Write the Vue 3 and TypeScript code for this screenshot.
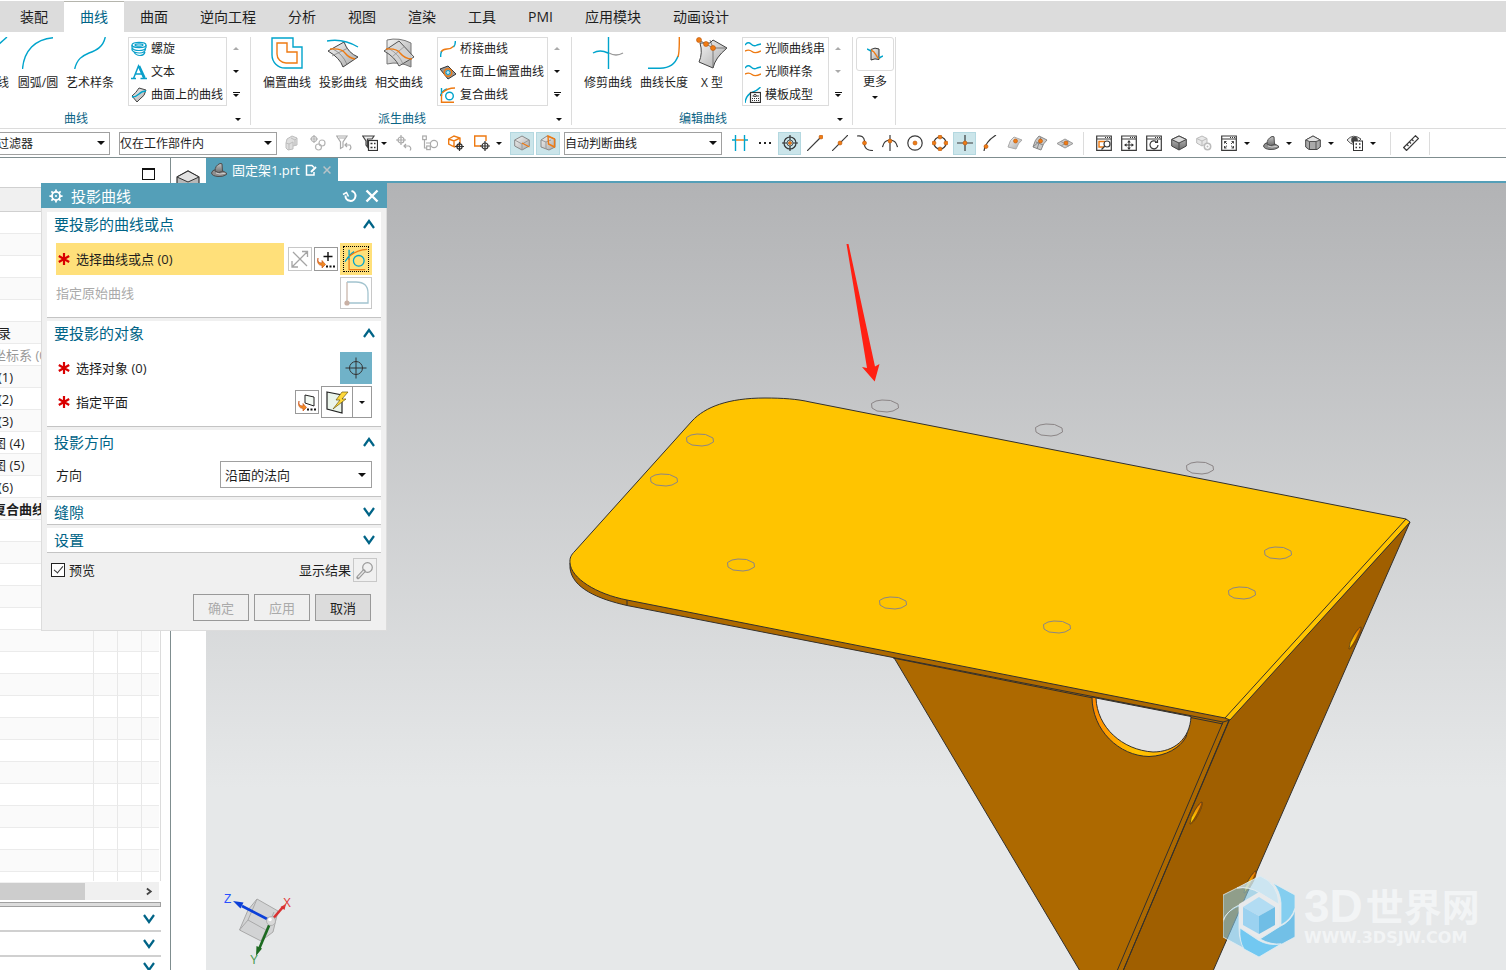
<script setup lang="ts">
import { ref } from 'vue'

interface Tool { icon: string; label: string; pressed?: boolean; menu?: boolean }
interface Command { icon: string; label: string; narrow?: string }
interface Group { title: string; cls: string; big: Command[]; list: Command[]; end?: boolean }
interface TreeRow { text: string; inset?: boolean; muted?: boolean; strong?: boolean }

const tabs = ['装配', '曲线', '曲面', '逆向工程', '分析', '视图', '渲染', '工具', 'PMI', '应用模块', '动画设计']
const activeTab = ref('曲线')

const groups: Group[] = [
  {
    title: '曲线', cls: 'first',
    big: [
      { icon: 'line', label: '直线', narrow: 'w34' },
      { icon: 'arc', label: '圆弧/圆', narrow: 'w48' },
      { icon: 'spline', label: '艺术样条' }
    ],
    list: [
      { icon: 'helix', label: '螺旋' },
      { icon: 'text', label: '文本' },
      { icon: 'surfcurve', label: '曲面上的曲线' }
    ]
  },
  {
    title: '派生曲线', cls: '',
    big: [
      { icon: 'offset', label: '偏置曲线' },
      { icon: 'project', label: '投影曲线' },
      { icon: 'intersect', label: '相交曲线' }
    ],
    list: [
      { icon: 'bridge', label: '桥接曲线' },
      { icon: 'faceoffset', label: '在面上偏置曲线' },
      { icon: 'composite', label: '复合曲线' }
    ]
  },
  {
    title: '编辑曲线', cls: '', end: true,
    big: [
      { icon: 'trim', label: '修剪曲线' },
      { icon: 'length', label: '曲线长度' },
      { icon: 'xform', label: 'X 型', narrow: 'w40' }
    ],
    list: [
      { icon: 'smooth', label: '光顺曲线串' },
      { icon: 'smooth', label: '光顺样条' },
      { icon: 'template', label: '模板成型' }
    ]
  }
]

const filterTools: Tool[] = [
  { icon: 'boxes', label: '选择组件' },
  { icon: 'chain', label: '关联选择' },
  { icon: 'funnelback', label: '重置过滤器' },
  { icon: 'funnellist', label: '过滤器选项', menu: true }
]
const pickTools: Tool[] = [
  { icon: 'targetback', label: '恢复选择' },
  { icon: 'treecircle', label: '全选' },
  { icon: 'cubetarget', label: '选择体' },
  { icon: 'recttarget', label: '矩形选择', menu: true }
]
const cubeTools: Tool[] = [
  { icon: 'cubeedge', label: '高亮隐藏边', pressed: true },
  { icon: 'cubeface', label: '允许选择隐藏线框', pressed: true }
]
const snapTools: Tool[] = [
  { icon: 'hash', label: '在相交处停止' },
  { icon: 'dots', label: '更多选项' },
  { icon: 'snapon', label: '启用捕捉点', pressed: true },
  { icon: 'endpoint', label: '端点' },
  { icon: 'midpoint', label: '中点' },
  { icon: 'control', label: '控制点' },
  { icon: 'cross', label: '交点' },
  { icon: 'center', label: '圆弧中心' },
  { icon: 'quadrant', label: '象限点' },
  { icon: 'existing', label: '现有点', pressed: true },
  { icon: 'oncurve', label: '曲线上的点' },
  { icon: 'onface', label: '面上的点' },
  { icon: 'onmesh', label: '小平面顶点' },
  { icon: 'grid', label: '有界栅格点' }
]
const viewTools: Tool[] = [
  { icon: 'winzoom', label: '缩放' },
  { icon: 'winpan', label: '平移' },
  { icon: 'winrotate', label: '旋转' },
  { icon: 'solid', label: '透视' },
  { icon: 'solidgear', label: '编辑截面' },
  { icon: 'winfit', label: '适合窗口', menu: true },
  { icon: 'bracket', label: '定向视图', menu: true },
  { icon: 'shaded', label: '带边着色', menu: true },
  { icon: 'eyelist', label: '显示和隐藏', menu: true }
]

const named: TreeRow[] = [
  { text: '' }, { text: '' }, { text: '' }, { text: '' }, { text: '' },
  { text: '录', inset: true },
  { text: '坐标系 (0)', muted: true },
  { text: '(1)', inset: true },
  { text: '(2)', inset: true },
  { text: '(3)', inset: true },
  { text: '图 (4)' },
  { text: '图 (5)' },
  { text: '(6)', inset: true },
  { text: '复合曲线', strong: true }
]
const rows: TreeRow[] = [...named, ...Array.from({ length: 17 }, () => ({ text: '' }))]

const curveRings: [number, number][] = [
  [885, 406], [1049, 430], [1200, 468], [1278, 553], [1242, 593],
  [1057, 627], [893, 603], [741, 565], [664, 480], [700, 440]
]
const slots: [number, number][] = [[1355, 638], [1196, 813], [1250, 882]]
const preview = ref(true)
const direction = ref('沿面的法向')
</script>

<template>
  <svg class="defs" width="0" height="0" aria-hidden="true">
    <defs>
      <linearGradient id="steel" x1="0" y1="0" x2="1" y2="1">
        <stop offset="0" stop-color="#f4f4f4" /><stop offset="1" stop-color="#a9a9a9" />
      </linearGradient>
      <linearGradient id="dark" x1="0" y1="0" x2="0" y2="1">
        <stop offset="0" stop-color="#c4c4c4" /><stop offset="1" stop-color="#6c6c6c" />
      </linearGradient>
      <linearGradient id="rim" x1="0" y1="0" x2="1" y2="0">
        <stop offset="0" stop-color="#ff8a00" /><stop offset="0.45" stop-color="#ffc400" />
        <stop offset="0.75" stop-color="#ffb000" /><stop offset="1" stop-color="#e07000" />
      </linearGradient>
      <linearGradient id="slotfill" x1="0" y1="1" x2="0" y2="0">
        <stop offset="0.2" stop-color="#ffd000" /><stop offset="0.9" stop-color="#e87800" />
      </linearGradient>
    </defs>

    <symbol id="line" viewBox="0 0 32 32"><path class="c" d="M0 23L26 0" /></symbol>
    <symbol id="arc" viewBox="0 0 32 32"><path class="c" d="M.5 32C2 14 13 2 31 .7" /></symbol>
    <symbol id="spline" viewBox="0 0 32 32"><path class="c" d="M.7 32C3 22 8 19 15 16C23 13 29 10 31.300 0" /></symbol>
    <symbol id="offset" viewBox="0 0 32 32">
      <path class="c" d="M1 1H22V10H31V31H14A13 13 0 0 1 1 18Z" />
      <path class="o" d="M6 6H16V15H26V26H15A9 9 0 0 1 6 17Z" />
    </symbol>
    <symbol id="project" viewBox="0 0 32 32">
      <path d="M1 14L17 5Q21 16 31 20L16 30Q13 21 1 14Z" fill="url(#steel)" stroke="#444" />
      <path d="M5 11.500Q16 17 20 27.500M21 11L5 19" fill="none" stroke="#777" stroke-width=".7" />
      <path class="o" d="M3 12Q15 11 18 16Q22 21 28 22" />
      <path class="c" d="M0 4Q16 1 31 10" />
    </symbol>
    <symbol id="intersect" viewBox="0 0 32 32">
      <path d="M4 3Q16 0 28 6V30Q16 24 4 27Z" fill="url(#steel)" stroke="#777" />
      <path d="M1 14L16 4L31 20L16 29Q12 20 1 14Z" fill="#d4d4d4" fill-opacity=".75" stroke="#555" />
      <path d="M5 11Q16 17 20 27M22 9L10 19" fill="none" stroke="#888" stroke-width=".7" />
      <path class="o" d="M3 12Q14 11 17 16Q22 22 29 22" />
    </symbol>
    <symbol id="trim" viewBox="0 0 32 32">
      <path class="c" d="M16.500 0V32M1 16Q8 12 16 16" />
      <path d="M17 16Q24 20 31 16" fill="none" stroke="#999" stroke-width="1.300" />
    </symbol>
    <symbol id="length" viewBox="0 0 32 32">
      <path class="c" d="M0 31.300H12Q26 31 30 19" /><path class="o" d="M30 20Q31.500 15 31.300 0" />
    </symbol>
    <symbol id="xform" viewBox="0 0 32 32">
      <path d="M14 6L17 3L31 11Q19 21 17 31L3 25Q7 16 4 6Z" fill="url(#steel)" stroke="#444" />
      <path d="M3 3L17 11L14 3M17 11L31 11M17 11V31" fill="none" stroke="#666" stroke-width=".8" />
      <circle cx="3" cy="3" r="2.500" class="od" /><circle cx="10" cy="7" r="2.500" class="od" /><circle cx="17" cy="11" r="2.500" class="od" />
    </symbol>
    <symbol id="more" viewBox="0 0 16 16">
      <path d="M4 3.500Q8 1 12 3V13.500Q8 12 4 14Z" fill="url(#steel)" stroke="#333" />
      <path class="o" d="M4 4Q7 5 9 9T13 12" /><path class="c" d="M0 3L4 5M12 12L16 10" />
    </symbol>

    <symbol id="helix" viewBox="0 0 16 16">
      <g fill="none" stroke="#0a9fca" stroke-width="1.200">
        <ellipse cx="8" cy="4" rx="7" ry="2.600" /><ellipse cx="8" cy="4" rx="4" ry="1.200" />
        <path d="M1 4V6.500Q2 9.500 8 9.500T15 6.500V4M1 7V9Q3 12 8.500 12T14.500 8M3 11Q5 14.500 9 14.500T14 11" />
      </g>
    </symbol>
    <symbol id="text" viewBox="0 0 16 16">
      <path d="M0 14.500H5M9.500 14.500H16M2.500 14.500L7.500 2L13 14.500M4.500 10H11" fill="none" stroke="#0a9fca" stroke-width="1.500" />
      <path d="M8 2L13.500 14" stroke="#0a9fca" stroke-width="2.600" />
    </symbol>
    <symbol id="surfcurve" viewBox="0 0 16 16">
      <path d="M1 9Q5 6 8 1L15 3Q14 9 9 12L6 15Z" fill="url(#steel)" stroke="#444" />
      <path class="c" d="M1 10Q5 10 8 7T15 4" />
    </symbol>
    <symbol id="bridge" viewBox="0 0 16 16">
      <path class="o" d="M1 11Q3 8 7 8T14 5" /><path class="c" d="M.7 16Q.5 13 1.500 10.500M13.500 6Q15.500 4 15.300 0" />
    </symbol>
    <symbol id="faceoffset" viewBox="0 0 16 16">
      <path d="M0 5L8 2L16 10L8 15Z" fill="#999" stroke="#333" />
      <circle cx="8" cy="8.500" r="3.800" class="o" /><circle cx="8" cy="8.500" r="2" fill="#bfe6f0" stroke="#0a9fca" />
    </symbol>
    <symbol id="composite" viewBox="0 0 16 16">
      <path class="c" d="M1.500 1V9M0 9Q3 3 7 2" /><path class="o" d="M1.500 7V15.300H14M2 6Q7 1 15 1" /><circle class="c" cx="9.500" cy="9" r="3.800" />
    </symbol>
    <symbol id="smooth" viewBox="0 0 16 16">
      <path class="c" d="M0 4Q3 0 6 3T12 4L16 3" /><path class="o" d="M0 10Q4 8 7 10.500T16 10" />
    </symbol>
    <symbol id="template" viewBox="0 0 16 16">
      <path class="c" d="M0 16Q1 8 7 5.500T15.500 0" />
      <rect x="5.500" y="5.500" width="10" height="10" fill="#fff" stroke="#333" stroke-width="1.200" />
      <path d="M7 13.500H14M7 11.500H14" stroke="#333" stroke-dasharray="1 1" /><path d="M7.500 9H9M11 9H14" stroke="#333" /><circle cx="10" cy="8.500" r="1.200" fill="none" stroke="#333" />
    </symbol>

    <symbol id="boxes" viewBox="0 0 16 16">
      <path d="M3 4L8 1L13 3V10L9 11V14L4 15L2 13V8Z" fill="#dedede" stroke="#bdbdbd" /><path d="M2 8L5 9L9 7M5 9V15M9 7V11M7 3L11 5L13 3M11 5V10" fill="none" stroke="#bdbdbd" />
    </symbol>
    <symbol id="chain" viewBox="0 0 16 16">
      <g fill="none" stroke="#b5b5b5" stroke-width="1.200"><circle cx="4" cy="4" r="2.700" /><path d="M4 0V8M0 4H8" /><circle cx="12" cy="8" r="3" /><circle cx="8.500" cy="12" r="3" /></g>
    </symbol>
    <symbol id="funnelback" viewBox="0 0 16 16">
      <g fill="none" stroke="#aaa" stroke-width="1.200"><path d="M.7 1H11L7 7V12L4.500 13.500V7Z" /><path d="M3 3H9M9 10H14Q16 13 13.500 15M11 8L9 10L11 12" /></g>
    </symbol>
    <symbol id="funnellist" viewBox="0 0 16 16">
      <path d="M.7 1H12L10 4H5.500V12L4 10V6Z" fill="#eee" stroke="#444" stroke-width="1.200" />
      <rect x="6.500" y="5.500" width="9" height="10" fill="#fff" stroke="#333" stroke-width="1.200" /><path d="M8.500 8.500H10.500M8.500 12.500H10.500M12 8.500H13.500M12 12.500H13.500" stroke="#333" stroke-width="1.400" />
    </symbol>
    <symbol id="targetback" viewBox="0 0 16 16">
      <g fill="none" stroke="#aaa" stroke-width="1.200"><circle cx="5" cy="5" r="3" /><path d="M5 0V10M0 5H10M8 11H13Q16 13 14 15.500M10 9L8 11L10 13" /></g>
    </symbol>
    <symbol id="treecircle" viewBox="0 0 16 16">
      <g fill="none" stroke="#aaa" stroke-width="1.200"><rect x=".7" y="1" width="3.600" height="3.600" /><path d="M2.500 5V13H5M4 8H8" /><rect x="4.700" y="11" width="3.600" height="3.600" /><circle cx="12" cy="9" r="3.600" /></g>
    </symbol>
    <symbol id="cubetarget" viewBox="0 0 16 16">
      <path class="o" d="M.7 4L6 1L12 3V9L6.500 12L.7 9ZM.7 4L6 6L12 3M6 6V12" />
      <g fill="none" stroke="#333" stroke-width="1.200"><circle cx="11.500" cy="11.500" r="2.600" /><path d="M11.500 7V16M7 11.500H16" /></g>
    </symbol>
    <symbol id="recttarget" viewBox="0 0 16 16">
      <path class="o" d="M7 11H.7V1H12V6" /><g fill="none" stroke="#333" stroke-width="1.200"><circle cx="11" cy="11" r="3" /><path d="M11 6V16M6 11H16" /></g>
    </symbol>
    <symbol id="cubeedge" viewBox="0 0 16 16">
      <path d="M.7 5L8 1L15.300 5V11L8 15L.7 11Z" fill="url(#steel)" stroke="#888" /><path d="M.7 5L8 9L15.300 5M8 9V15" fill="none" stroke="#999" /><path class="o" d="M8 8L15.500 12" />
    </symbol>
    <symbol id="cubeface" viewBox="0 0 16 16">
      <path d="M1 5L7 1L15 4V12L9 15L1 12Z" fill="url(#steel)" stroke="#888" /><path d="M1 5L6 7V14M6 7L11 5" fill="none" stroke="#999" /><path class="o" d="M8 1L14.500 4V12L8.500 9Z" />
    </symbol>
    <symbol id="hash" viewBox="0 0 16 16"><path class="c" d="M3.500 0V16M12.500 0V16M0 5H3M13 5H16" /><path class="o" d="M4 5H12" /></symbol>
    <symbol id="dots" viewBox="0 0 16 16"><path d="M2 8H4M7 8H9M12 8H14" stroke="#222" stroke-width="2" /></symbol>
    <symbol id="snapon" viewBox="0 0 16 16">
      <g fill="none" stroke="#333" stroke-width="1.200"><circle cx="8" cy="8" r="6" /><circle cx="8" cy="8" r="3" stroke-width=".8" /><path d="M8 0V5M8 11V16M0 8H5M11 8H16" /></g><circle cx="8" cy="8" r="1.600" class="od" />
    </symbol>
    <symbol id="endpoint" viewBox="0 0 16 16"><path class="k" d="M0 16L13 3" /><circle cx="14" cy="2" r="2" class="od" /></symbol>
    <symbol id="midpoint" viewBox="0 0 16 16"><path class="k" d="M0 16L16 0" /><circle cx="8" cy="8" r="2" class="od" /></symbol>
    <symbol id="control" viewBox="0 0 16 16"><path class="k" d="M0 1Q7 0 7.500 6V10Q8 15.500 16 15.500" /><circle cx="7.500" cy="8" r="2" class="od" /></symbol>
    <symbol id="cross" viewBox="0 0 16 16"><path class="k" d="M8 0V16M.5 12Q2 5 8 5T15.500 12" /><circle cx="8" cy="6" r="2" class="od" /></symbol>
    <symbol id="center" viewBox="0 0 16 16"><circle class="k" cx="8" cy="8" r="7.200" /><circle cx="8" cy="8" r="2" class="od" /></symbol>
    <symbol id="quadrant" viewBox="0 0 16 16"><circle class="k" cx="8" cy="8" r="6" /><circle cx="8" cy="2" r="2" class="od" /><circle cx="8" cy="14" r="2" class="od" /><circle cx="2" cy="8" r="2" class="od" /><circle cx="14" cy="8" r="2" class="od" /></symbol>
    <symbol id="existing" viewBox="0 0 16 16"><path class="k" d="M8 0V16M0 8H16" /><circle cx="8" cy="8" r="2" class="od" /></symbol>
    <symbol id="oncurve" viewBox="0 0 16 16"><path class="k" d="M2 16Q3 7 14 0" /><circle cx="4" cy="11.500" r="2" class="od" /></symbol>
    <symbol id="onface" viewBox="0 0 16 16"><path d="M1 12Q3 4 7 2L15 5Q11 8 9 14Z" fill="url(#steel)" stroke="#aaa" /><circle cx="8.500" cy="6" r="2" class="od" /></symbol>
    <symbol id="onmesh" viewBox="0 0 16 16"><path d="M1 12Q3 4 7 1L15 5Q11 8 9 15Z" fill="#c8c8c8" stroke="#888" /><path d="M4 7L11 10M5 14L9 2M1 12L10 4" stroke="#888" /><circle cx="8.500" cy="6" r="2" class="od" /></symbol>
    <symbol id="grid" viewBox="0 0 16 16"><path d="M0 8.500L8 4L16 8.500L8 13Z" fill="#ccc" stroke="#999" /><path d="M4 6.500L12 11M4 11L12 6" stroke="#999" /><circle cx="9" cy="8" r="2" class="od" /></symbol>

    <symbol id="winzoom" viewBox="0 0 16 16"><path class="k" d="M.7 1H15.300V15.300H.7ZM.7 4H15" /><path d="M9 2.500H14" stroke="#333" stroke-dasharray="1 1" /><path class="o" d="M8 12H3V6.500H9" /><circle cx="11" cy="9" r="3" class="k" /><path class="k" d="M9 11L5.500 14.500" /></symbol>
    <symbol id="winpan" viewBox="0 0 16 16"><path class="k" d="M.7 1H15.300V15.300H.7ZM.7 4H15" /><path d="M8 6V14M4 10H12" stroke="#333" /><path d="M8 5L9.800 7.500H6.200ZM8 15L9.800 12.500H6.200ZM3 10L5.500 8.200V11.800ZM13 10L10.500 8.200V11.800Z" fill="#333" /><path d="M9 2.500H14" stroke="#333" stroke-dasharray="1 1" /></symbol>
    <symbol id="winrotate" viewBox="0 0 16 16"><path class="k" d="M.7 1H15.300V15.300H.7ZM.7 4H15M10.500 6.700A4 4 0 1 0 12 10M11.500 5V7.500H9" /><path d="M9 2.500H14" stroke="#333" stroke-dasharray="1 1" /></symbol>
    <symbol id="winfit" viewBox="0 0 16 16"><path class="k" d="M.7 1H15.300V15.300H.7ZM.7 4H15" /><path d="M3.500 8.500V6.500H5.500M3.500 6.500L6 9M12.500 8.500V6.500H10.500M12.500 6.500L10 9M3.500 11V13H5.500M3.500 13L6 10.700M12.500 11V13H10.500M12.500 13L10 10.700" fill="none" stroke="#333" stroke-width=".9" /><path d="M9 2.500H14" stroke="#333" stroke-dasharray="1 1" /></symbol>
    <symbol id="solid" viewBox="0 0 16 16"><path d="M.7 4.500L8 1L15.300 4.500V11L8 15L.7 11Z" fill="url(#dark)" stroke="#444" /><path d="M.7 4.500L8 8L15.300 4.500L8 1Z" fill="#dcdcdc" stroke="#444" /><path d="M8 8V15" stroke="#444" /></symbol>
    <symbol id="solidgear" viewBox="0 0 16 16"><path d="M.7 3.500L6 1L11 3.500V8L6 11L.7 8Z" fill="#e8e8e8" stroke="#bbb" /><path d="M.7 3.500L6 6L11 3.500M6 6V11" fill="none" stroke="#bbb" /><circle cx="11.500" cy="11.500" r="3.200" fill="#fff" stroke="#bbb" stroke-width="1.500" /><circle cx="11.500" cy="11.500" r="1" fill="#bbb" /></symbol>
    <symbol id="bracket" viewBox="0 0 16 16">
      <path d="M.5 11Q1 8 5 7.500L10 8L15.500 11V12.500Q12 15 7 14.500Q1 14 .5 11Z" fill="#8e8e8e" stroke="#4c4c4c" />
      <path d="M4 9Q4 3.500 9 1.500L11 1.800L11.500 9.500Q7 12 4 9Z" fill="url(#dark)" stroke="#4c4c4c" />
      <path d="M5 11Q8 13 14.500 11.200" fill="none" stroke="#d0d0d0" />
    </symbol>
    <symbol id="shaded" viewBox="0 0 16 16"><path d="M.7 5L8 1L15.300 5V12L12 14.500H4L.7 12Z" fill="#aaa" stroke="#444" /><path d="M.7 5L8 1L15.300 5L11 6.500H4.500Z" fill="#e4e4e4" stroke="#555" /><path d="M4.500 6.500V14.500M11 6.500V14.500" stroke="#555" /></symbol>
    <symbol id="eyelist" viewBox="0 0 16 16"><path d="M0 5Q6 -2 14 4L8 10Q3 9 0 5Z" fill="#eee" stroke="#555" /><circle cx="7.500" cy="5" r="3.300" fill="#444" /><rect x="6.500" y="6" width="9" height="9.500" fill="#fff" stroke="#333" /><path d="M8.500 9H10M8.500 12.500H10M12 9H13.500M12 12.500H13.500" stroke="#333" stroke-width="1.400" /></symbol>
    <symbol id="ruler" viewBox="0 0 16 16"><path class="k" d="M.7 12.500L12.500 .7L15.500 3.500L3.500 15.500ZM4 9.500L5.500 11M6.500 7L8 8.500M9 4.500L10.500 6" /></symbol>

    <symbol id="gear" viewBox="0 0 16 16"><circle cx="8" cy="8" r="4.600" fill="none" stroke="#fff" stroke-width="2" /><path d="M8 .5V4M8 12V15.500M.5 8H4M12 8H15.500M2.700 2.700L5 5M11 11L13.300 13.300M13.300 2.700L11 5M5 11L2.700 13.300" stroke="#fff" stroke-width="2" /><circle cx="8" cy="8" r="1.200" fill="#fff" /></symbol>
    <symbol id="reset" viewBox="0 0 16 16"><path d="M9.500 3A5 5 0 1 1 3.500 7.500" fill="none" stroke="#fff" stroke-width="2" /><path d="M1 6.500L4.500 4.500L6.500 8.500" fill="none" stroke="#fff" stroke-width="1.500" /></symbol>
    <symbol id="close" viewBox="0 0 16 16"><path d="M2.500 2.500L13.500 13.500M13.500 2.500L2.500 13.500" stroke="currentColor" stroke-width="2.400" /></symbol>
    <symbol id="up" viewBox="0 0 12 10"><path d="M1 9L6 2L11 9" fill="none" stroke="#006487" stroke-width="2.200" /></symbol>
    <symbol id="down" viewBox="0 0 12 10"><path d="M1 1L6 8L11 1" fill="none" stroke="#006487" stroke-width="2.200" /></symbol>
    <symbol id="star" viewBox="0 0 12 12"><path d="M6 0V12M.8 3L11.200 9M.8 9L11.200 3" stroke="#d90000" stroke-width="2.200" /></symbol>
    <symbol id="reverse" viewBox="0 0 20 20"><path d="M3 3L17 17M17 3L2 18M12 2.500H17.500V8M2 12V18H8" fill="none" stroke="#a5a5a5" stroke-width="1.300" /></symbol>
    <symbol id="addpoint" viewBox="0 0 20 20"><path d="M12 3V12M7.500 7.500H16.500" stroke="#111" stroke-width="1.400" /><path d="M2 9Q1 14 6 14V11.500L9.500 15.500L6 19V16.500Q0 16 2 9Z" fill="#f08a24" stroke="#c44a10" stroke-width=".6" /><path d="M10 17.500H12M13.500 17.500H15.500M17 17.500H19" stroke="#111" stroke-width="2" /></symbol>
    <symbol id="curvepick" viewBox="0 0 26 26"><path class="c" d="M5.500 3V14M1 16Q6 8 11 5" /><path class="o" d="M5.500 12V24.500H23M6 10Q14 3 25 2.500" /><circle class="c" cx="16" cy="15" r="5.800" /></symbol>
    <symbol id="origin" viewBox="0 0 26 26"><path d="M4 22V2" fill="none" stroke="#c9b7ac" stroke-width="1.300" /><path d="M4 2H13Q25 2 25 13V23H6" fill="none" stroke="#a3c4cf" stroke-width="1.300" /><circle cx="4" cy="23" r="2.600" fill="#c9b0a4" /></symbol>
    <symbol id="pick" viewBox="0 0 26 26"><circle cx="13" cy="13" r="6.500" fill="none" stroke="#333" /><path d="M13 2.500V23.500M2.500 13H23.500" stroke="#333" /></symbol>
    <symbol id="planedlg" viewBox="0 0 20 20"><path d="M8 3L17 5V14L8 11Z" fill="#f4faf4" stroke="#222" /><path d="M2 9Q1 14 6 14V11.500L9.500 15.500L6 19V16.500Q0 16 2 9Z" fill="#f08a24" stroke="#c44a10" stroke-width=".6" /><path d="M10 17.500H12M13.500 17.500H15.500M17 17.500H19" stroke="#111" stroke-width="2" /></symbol>
    <symbol id="plane" viewBox="0 0 26 26"><path d="M3 3L18 6V24L3 20Z" fill="#eaf4ea" stroke="#222" stroke-width="1.200" /><path d="M18 3L12 11H16L9 20L22 10H18L24 3Z" fill="#ffd83a" stroke="#6b5a10" stroke-width=".7" /></symbol>
    <symbol id="loupe" viewBox="0 0 20 20"><circle cx="12.500" cy="7.500" r="4.800" fill="none" stroke="#999" stroke-width="1.200" /><path d="M9 11L3 17.500" stroke="#999" stroke-width="3.400" stroke-linecap="round" /><path d="M9 11L3.200 17.200" stroke="#e6e6e6" stroke-width="1.400" /></symbol>
    <symbol id="docedit" viewBox="0 0 12 12"><path d="M9 8V11H1.500V1.500H7L9 3.500" fill="none" stroke="#fff" stroke-width="1.500" /><path d="M6 8L11 3" stroke="#fff" stroke-width="2" /></symbol>
    <symbol id="part" viewBox="0 0 24 24"><path d="M1 8L12 2L23 8V20H1Z" fill="#b8b8b8" stroke="#333" stroke-width="1.200" /><path d="M1 8L12 2L23 8L12 13Z" fill="#e2e2e2" stroke="#333" /></symbol>
  </svg>

  <div class="app">
    <nav class="tabs">
      <button v-for="t in tabs" :key="t" type="button" class="tab" :class="{ active: t === activeTab }" @click="activeTab = t">{{ t }}</button>
    </nav>

    <div class="ribbon">
      <section v-for="g in groups" :key="g.title" class="group" :class="g.cls">
        <div class="cmds">
          <button v-for="b in g.big" :key="b.label" type="button" class="big" :class="b.narrow">
            <svg class="i32"><use :href="'#' + b.icon" /></svg><span>{{ b.label }}</span>
          </button>
          <div class="gallery">
            <button v-for="c in g.list" :key="c.label" type="button" class="small">
              <svg class="i16"><use :href="'#' + c.icon" /></svg><span>{{ c.label }}</span>
            </button>
          </div>
          <div class="scroller">
            <button type="button" aria-label="向上" class="scroll"><i class="tri upward faint"></i></button>
            <button type="button" aria-label="向下" class="scroll"><i class="tri" :class="{ faint: g.end }"></i></button>
            <button type="button" aria-label="展开" class="scroll"><i class="bar"></i><i class="tri"></i></button>
          </div>
        </div>
        <div class="caption"><span>{{ g.title }}</span><button type="button" aria-label="选项" class="launch"><i class="tri"></i></button></div>
      </section>
      <section class="group last">
        <button type="button" class="more">
          <span class="frame"><svg class="i16"><use href="#more" /></svg></span><span>更多</span><i class="tri"></i>
        </button>
      </section>
    </div>

    <div class="selbar">
      <label class="combo cut"><select aria-label="选择过滤器"><option>无选择过滤器</option></select></label>
      <label class="combo scope"><select aria-label="选择范围"><option>仅在工作部件内</option></select></label>
      <div class="tools wide">
        <template v-for="t in filterTools" :key="t.icon">
          <button type="button" class="tool" :aria-label="t.label"><svg class="i16"><use :href="'#' + t.icon" /></svg></button>
          <button v-if="t.menu" type="button" class="drop" :aria-label="t.label + '菜单'"><i class="tri"></i></button>
        </template>
      </div>
      <div class="tools wide pick">
        <template v-for="t in pickTools" :key="t.icon">
          <button type="button" class="tool" :aria-label="t.label"><svg class="i16"><use :href="'#' + t.icon" /></svg></button>
          <button v-if="t.menu" type="button" class="drop" :aria-label="t.label + '菜单'"><i class="tri"></i></button>
        </template>
      </div>
      <div class="tools wide cubes">
        <button v-for="t in cubeTools" :key="t.icon" type="button" class="tool" :class="{ pressed: t.pressed }" :aria-label="t.label"><svg class="i16"><use :href="'#' + t.icon" /></svg></button>
      </div>
      <label class="combo rule"><select aria-label="曲线规则"><option>自动判断曲线</option></select></label>
      <div class="tools snap">
        <button v-for="t in snapTools" :key="t.icon" type="button" class="tool" :class="{ pressed: t.pressed }" :aria-label="t.label"><svg class="i16"><use :href="'#' + t.icon" /></svg></button>
      </div>
      <div class="tools view">
        <template v-for="t in viewTools" :key="t.icon">
          <button type="button" class="tool" :aria-label="t.label"><svg class="i16"><use :href="'#' + t.icon" /></svg></button>
          <button v-if="t.menu" type="button" class="drop" :aria-label="t.label + '菜单'"><i class="tri"></i></button>
        </template>
      </div>
      <div class="tools view measure">
        <button type="button" class="tool" aria-label="测量"><svg class="i16"><use href="#ruler" /></svg></button>
      </div>
    </div>

    <main class="work">
      <aside class="side">
        <div class="sidehead"><button type="button" class="max" aria-label="最大化"></button></div>
        <div class="treewrap">
          <table class="tree">
            <colgroup><col /><col class="cc" /><col class="cc" /><col class="ce" /></colgroup>
            <thead><tr><th></th><th></th><th></th><th></th></tr></thead>
            <tbody>
              <tr v-for="(r, n) in rows" :key="n">
                <td :class="{ inset: r.inset, muted: r.muted, strong: r.strong }">{{ r.text }}</td><td></td><td></td><td></td>
              </tr>
            </tbody>
          </table>
        </div>
        <div class="hscroll"><span class="thumb"></span><svg class="chev" viewBox="0 0 8 10"><path d="M1 1.500L5.500 5L1 8.500" fill="none" stroke="#444" stroke-width="2" /></svg></div>
        <div class="splitter"></div>
        <button v-for="n in 3" :key="n" type="button" class="fold" aria-label="展开面板"><svg class="arrow"><use href="#down" /></svg></button>
      </aside>
      <div class="rail"><svg class="i24"><use href="#part" /></svg></div>
      <section class="stage">
        <div class="docs">
          <div class="doc">
            <svg class="i16"><use href="#bracket" /></svg><span>固定架1.prt</span><svg class="i12"><use href="#docedit" /></svg>
            <button type="button" class="x" aria-label="关闭文档"><svg class="i10"><use href="#close" /></svg></button>
          </div>
        </div>
        <div class="canvas">
          <svg class="scene" viewBox="206 183 1300 787" preserveAspectRatio="xMidYMid slice">
            <g stroke="#33302c" stroke-width="1" stroke-linejoin="round">
              <path d="M1229 720L1410 522L1213 971H1117Z" fill="#a05f00" />
              <path d="M893 656L1229 720L1123 971H1080Z" fill="#ad6900" />
              <path d="M1223 722L1117 971" fill="none" />
              <path d="M1229 721L1123 971" fill="none" />
              <path d="M570 563V568C572 588 598 599 627 605.500L1223 722L1230 720L1225 716L627 598Z" fill="#ad6900" />
              <path d="M893 658L1223 724M627 600V605" fill="none" />
              <path d="M1092 697C1092 730 1119 756 1149 756.500C1166 756 1180 748 1186 737L1191 717Z" fill="url(#rim)" />
              <path d="M1096 698L1191 716.500C1190 739 1174 752 1153 752C1122 750 1097 727 1096 698Z" fill="#e3e4e6" />
              <path d="M570 563C569.500 558 571 555 575 551L692 421C705 407 728 398 765 398C783 398 797 399 810 402L1406 519L1410 522L1230 720L1225 718L627 600C596 594 571 578 570 563Z" fill="#ffc400" />
              <path d="M1406 519L1225 718" fill="none" />
            </g>
            <g v-for="(s, n) in slots" :key="'s' + n" :transform="`translate(${s[0]} ${s[1]})`">
              <path d="M-6 11Q-6 5 -1 -3T6 -11Q7 -7 2 2T-6 11Z" fill="url(#slotfill)" stroke="#4a3520" stroke-width=".8" />
              <path d="M6 -11Q7 -7 2 2T-6 11Q1 2 6 -11Z" fill="#8a4c00" />
            </g>
            <g fill="none" stroke="#8b8586">
              <polygon v-for="(c, n) in curveRings" :key="n" :transform="`translate(${c[0]} ${c[1]})`" points="-13.500,-2.500 -9,-5 -3,-6 5.500,-5.500 13,-2 13.500,2 8,5 2,6 -8,5 -13,2" />
            </g>
            <polygon points="846.500,244 848.500,244 875,366.500 879.500,364 874.700,381.500 862,367 867,368" fill="#ff2013" />
            <g>
              <path d="M257 899L278 911L273 932L261 941L239.500 930L248 910Z" fill="#d2d3d4" stroke="#a9a9a9" />
              <path d="M257 899L248 920L239.500 930M248 920L266 930L261 941M266 930L274 912" fill="none" stroke="#a9a9a9" />
              <path d="M271 921L242 906" stroke="#0b3fd8" stroke-width="2.600" /><path d="M233 901L243.500 902.500L240.500 908.500Z" fill="#0b3fd8" />
              <path d="M271 921L283 907" stroke="#d93030" stroke-width="2.600" /><path d="M286 904L284.500 910L280.500 907Z" fill="#d93030" />
              <path d="M271 921L259.500 948" stroke="#1c6a20" stroke-width="2.600" /><path d="M256 956L256.500 946L262 948.500Z" fill="#1c6a20" />
              <circle cx="271" cy="921" r="4.500" fill="#d8d8d8" stroke="#aaa" stroke-width=".8" /><circle cx="270" cy="919.500" r="1.800" fill="#fff" />
              <g class="axis"><text x="224" y="903" fill="#2950ff">Z</text><text x="283" y="907" fill="#e03c3c">X</text><text x="250" y="964" fill="#4a9a50">Y</text></g>
            </g>
          </svg>
          <div class="brand">
            <svg class="hex" viewBox="0 0 72 82">
              <g stroke="#e2edf3" stroke-width=".8">
                <path d="M0 20L14 13Q26 11 37 18L19 30Q5 34 0 45Z" fill="#86c8e6" fill-opacity=".6" />
                <path d="M0 47Q3 36 16 30V53Q16 66 22 74L0 62Z" fill="#7cc4ea" fill-opacity=".6" />
                <path d="M14 13L37 1Q55 8 56 30L37 18Q26 11 14 13Z" fill="#c6e4f3" fill-opacity=".8" />
                <path d="M50 8L72 20V33Q69 44 58 50V28Q57 16 50 8Z" fill="#84ceef" />
                <path d="M72 35V62L59 69Q48 70 37 64L56 52Q69 46 72 35Z" fill="#72c0e7" />
                <path d="M17 53L35 65Q45 71 58 69L36 82L21 74Q16 66 17 53Z" fill="#72c8f1" />
              </g>
              <path d="M36 17L56 29V52L36 63L16 52V29Z" fill="#e8eaec" />
              <path d="M36 22L52 32L36 41L20 32Z" fill="#b2dcf3" /><path d="M20 32L36 41V59L20 50Z" fill="#9bd2f0" /><path d="M52 32L36 41V59L52 50Z" fill="#70bee6" />
            </svg>
            <div class="words"><div class="name"><span class="latin">3D</span><span>世界网</span></div><div class="site">WWW.3DSJW.COM</div></div>
          </div>
        </div>
      </section>

      <form class="dialog" @submit.prevent>
        <header class="title">
          <svg class="i14"><use href="#gear" /></svg><h1>投影曲线</h1>
          <button type="button" aria-label="重置"><svg class="i16"><use href="#reset" /></svg></button>
          <button type="button" aria-label="关闭"><svg class="i16"><use href="#close" /></svg></button>
        </header>
        <section class="card">
          <button type="button" class="head"><span>要投影的曲线或点</span><svg class="arrow"><use href="#up" /></svg></button>
          <div class="body">
            <div class="row">
              <div class="field hot"><svg class="i12"><use href="#star" /></svg>选择曲线或点 (0)</div>
              <button type="button" class="b24 dim" aria-label="反向"><svg class="i20"><use href="#reverse" /></svg></button>
              <button type="button" class="b24" aria-label="点对话框"><svg class="i20"><use href="#addpoint" /></svg></button>
              <button type="button" class="b32 yellow" aria-label="曲线"><span class="focus"><svg class="i26"><use href="#curvepick" /></svg></span></button>
            </div>
            <div class="row">
              <div class="field plain">指定原始曲线</div>
              <button type="button" class="b32 dim" aria-label="原始曲线"><svg class="i26"><use href="#origin" /></svg></button>
            </div>
          </div>
        </section>
        <section class="card">
          <button type="button" class="head"><span>要投影的对象</span><svg class="arrow"><use href="#up" /></svg></button>
          <div class="body">
            <div class="row">
              <div class="field"><svg class="i12"><use href="#star" /></svg>选择对象 (0)</div>
              <button type="button" class="b32 blue" aria-label="选择对象"><svg class="i26"><use href="#pick" /></svg></button>
            </div>
            <div class="row">
              <div class="field"><svg class="i12"><use href="#star" /></svg>指定平面</div>
              <button type="button" class="b24" aria-label="平面对话框"><svg class="i20"><use href="#planedlg" /></svg></button>
              <div class="split">
                <button type="button" aria-label="自动判断平面"><svg class="i26"><use href="#plane" /></svg></button>
                <button type="button" class="splitdrop" aria-label="平面类型"><i class="tri"></i></button>
              </div>
            </div>
          </div>
        </section>
        <section class="card">
          <button type="button" class="head"><span>投影方向</span><svg class="arrow"><use href="#up" /></svg></button>
          <div class="body">
            <div class="row">
              <label class="field label" for="direction">方向</label>
              <div class="combo dir"><select id="direction" v-model="direction"><option>沿面的法向</option></select></div>
            </div>
          </div>
        </section>
        <section class="card"><button type="button" class="head"><span>缝隙</span><svg class="arrow"><use href="#down" /></svg></button></section>
        <section class="card"><button type="button" class="head"><span>设置</span><svg class="arrow"><use href="#down" /></svg></button></section>
        <div class="preview">
          <label class="check"><input v-model="preview" type="checkbox" /><span>预览</span></label>
          <span class="result">显示结果</span>
          <button type="button" class="b24 dim gray" aria-label="显示结果"><svg class="i20"><use href="#loupe" /></svg></button>
        </div>
        <footer class="actions">
          <button type="submit" disabled>确定</button><button type="button" disabled>应用</button><button type="button">取消</button>
        </footer>
      </form>
    </main>
  </div>
</template>

<style>
body { margin: 0; overflow: hidden; background: #fff; }
</style>

<style scoped>
.defs { position: absolute; }
.c { fill: none; stroke: #00a4cc; stroke-width: 1.4; }
.o { fill: none; stroke: #ee7a12; stroke-width: 1.4; }
.k { fill: none; stroke: #3a3a3a; stroke-width: 1.2; }
.od { fill: #f07c14; stroke: #b9560a; stroke-width: .6; }
.app { display: flex; flex-direction: column; height: 100vh; overflow: hidden; background: #fff; color: #1e1e1e; font-family: "Open Sans", "Noto Sans CJK SC", sans-serif; font-size: 12px; line-height: 16px; }
.app *, .app *::before, .app *::after { box-sizing: border-box; }
button { margin: 0; padding: 0; border: 0; background: none; color: inherit; font: inherit; }
svg { display: block; flex: none; }
.i10 { width: 10px; height: 10px; } .i12 { width: 12px; height: 12px; } .i14 { width: 14px; height: 14px; } .i16 { width: 16px; height: 16px; }
.i20 { width: 20px; height: 20px; } .i24 { width: 24px; height: 24px; } .i26 { width: 26px; height: 26px; } .i32 { width: 32px; height: 32px; }
.tri { display: block; width: 0; height: 0; border: 3px solid transparent; border-top-color: #111; border-bottom: 0; }
.tri.upward { border-top: 0; border-bottom: 3px solid #111; }
.tri.faint { border-top-color: #aaa; border-bottom-color: #aaa; }

.tabs { display: flex; flex: none; height: 32px; padding-left: 4px; border-top: 1px solid #fff; background: #dcdcdc; }
.tab { padding: 0 16px; font-size: 14px; line-height: 20px; white-space: nowrap; }
.tab.active { background: #fff; color: #006487; box-shadow: inset 0 1px #b5b5ad; }

.ribbon { display: flex; flex: none; height: 97px; padding-top: 5px; border-bottom: 1px solid #dcdcdc; }
.group { flex: none; height: 88px; padding: 0 5px 0 8px; border-right: 1px solid #dcdcdc; }
.group.first { width: 331px; margin-left: -80px; }
.group.last { padding: 0 1px 0 3px; }
.cmds { display: flex; justify-content: flex-end; height: 69px; }
.big { display: flex; flex-direction: column; align-items: center; justify-content: flex-start; gap: 6px; width: 56px; white-space: nowrap; }
.w34 { width: 34px; } .w40 { width: 40px; } .w48 { width: 48px; }
.gallery { margin-left: 10px; padding-right: 4px; box-shadow: inset 0 0 0 1px #dcdcdc; }
.small { display: flex; align-items: center; gap: 4px; height: 23px; padding-left: 3px; white-space: nowrap; }
.scroller { width: 18px; }
.scroll { display: flex; flex-direction: column; align-items: center; justify-content: center; gap: 1px; width: 18px; height: 23px; }
.bar { width: 7px; height: 1px; background: #111; }
.caption { display: flex; margin-left: -8px; padding: 6px 1px 0 0; color: #0b6485; line-height: 14px; }
.caption span { flex: 1; text-align: center; }
.launch { display: flex; align-items: center; justify-content: center; width: 12px; }
.more { display: flex; flex-direction: column; align-items: center; width: 38px; }
.frame { display: flex; align-items: center; justify-content: center; width: 38px; height: 34px; margin-bottom: 3px; border: 1px solid #dcdcdc; border-radius: 3px; }
.more .tri { margin-top: 6px; }

.selbar { display: flex; align-items: center; flex: none; height: 29px; border-bottom: 1px solid #7f8d8f; }
.combo { position: relative; display: block; flex: none; width: 158px; height: 23px; }
.combo select { width: 100%; height: 100%; padding: 1px 18px 0 0; border: 1px solid #a0a0a0; border-radius: 0; outline: 0; appearance: none; background: #fff; color: #1e1e1e; font: inherit; }
.combo::after { content: ""; position: absolute; top: 50%; right: 5px; margin-top: -2px; border: 4px solid transparent; border-top-color: #111; border-bottom: 0; pointer-events: none; }
.combo.cut { width: 150px; margin-left: -40px; }
.combo.scope { margin-left: 9px; }
.combo.rule { margin-left: 3px; }
.tools { display: flex; align-items: center; flex: none; height: 23px; }
.tool { display: flex; align-items: center; justify-content: center; width: 25px; height: 23px; }
.wide .tool { width: 26px; }
.wide { margin-left: 2px; }
.pick { margin-left: 2px; }
.pick .drop { margin-left: -1px; }
.cubes { margin-left: 5px; }
.snap { margin-left: 5px; padding-right: 6px; }
.pressed { border: 1px solid #fff; border-width: 0 1px; background: #cbe5ea; background-clip: padding-box; box-shadow: inset 0 0 0 1px #b4d8e0; }
.drop { display: flex; align-items: center; justify-content: center; width: 10px; height: 23px; margin-left: -4px; }
.view { padding-left: 7px; padding-right: 6px; border-left: 1px solid #dcdcdc; }
.view .drop { margin: 0 6px 0 1px; }
.measure { border-right: 1px solid #dcdcdc; }

.work { position: relative; display: flex; flex: 1; min-height: 0; }
.side { display: flex; flex-direction: column; flex: none; width: 161px; overflow: hidden; }
.sidehead { display: flex; justify-content: flex-end; flex: none; height: 30px; padding: 10px 6px 0; border-bottom: 1px solid #d0d0d0; }
.max { width: 13px; height: 12px; border: 1px solid #111; border-top-width: 2px; }
.treewrap { flex: 1; min-height: 0; overflow: hidden; padding-right: 1px; border-right: 1px solid #dcdcdc; }
.tree { width: 100%; border-collapse: separate; border-spacing: 0; table-layout: fixed; font-size: 13px; line-height: 18px; }
.cc { width: 24px; } .ce { width: 17px; }
th { height: 24px; padding: 0; border-bottom: 1px solid #d0d0d0; background: #f0f0f0; }
td { height: 22px; padding: 0; border-right: 1px solid #e8e8e8; border-bottom: 1px solid #ebebeb; white-space: nowrap; }
td:first-child { text-indent: -7px; }
td.inset:first-child { text-indent: -2px; }
td:last-child { border-right: 0; }
tr:nth-child(even) td { background: #fafafa; }
.muted { color: #999; }
.strong { font-weight: 700; }
.hscroll { display: flex; align-items: center; justify-content: space-between; flex: none; height: 18px; margin: 1px 2px 2px 0; padding-right: 6px; background: #f0f0f0; }
.thumb { width: 85px; height: 17px; background: #cdcdcd; }
.chev { width: 7px; height: 9px; }
.splitter { flex: none; height: 5px; border: 1px solid #a0a0a0; border-left: 0; background: #dcdcdc; }
.fold { display: flex; align-items: center; justify-content: flex-end; flex: none; height: 25px; padding-right: 6px; border-bottom: 2px solid #d0d0d0; }
.fold:last-child { height: 13px; border: 0; align-items: flex-start; padding-top: 5px; }
.arrow { width: 12px; height: 10px; }
.rail { flex: none; width: 36px; margin-left: 9px; padding: 11px 5px; border-left: 1px solid #7f8d8f; }
.stage { display: flex; flex: 1; flex-direction: column; min-width: 0; }
.docs { display: flex; flex: none; height: 25px; border-bottom: 2px solid #549fb8; }
.doc { display: flex; align-items: center; gap: 5px; padding: 0 6px 0 5px; background: #549fb8; color: #fff; font-size: 13px; line-height: 18px; white-space: nowrap; }
.x { color: #b9c4c8; }
.canvas { position: relative; flex: 1; min-height: 0; overflow: hidden; background: linear-gradient(#b2b3b5, #e6e8e9 77%); }
.scene { width: 100%; height: 100%; }
.axis { font: 12px "Liberation Sans", sans-serif; }
.brand { position: absolute; right: 24px; bottom: 13px; display: flex; align-items: center; gap: 9px; color: rgba(247, 248, 250, .75); }
.hex { width: 72px; height: 82px; }
.words { width: 178px; white-space: nowrap; }
.name { display: flex; align-items: center; gap: 3px; height: 40px; font-size: 38px; font-weight: 700; line-height: 40px; }
.latin { font-family: "Liberation Sans", sans-serif; font-size: 46px; }
.site { margin-top: 3px; font: 700 16px/18px "DejaVu Sans", sans-serif; }

.dialog { position: absolute; top: 25px; left: 41px; width: 346px; padding: 0 5px 9px; border: 1px solid #dcdcdc; border-top: 0; background: #f0f0f0; font-size: 13px; line-height: 18px; }
.title { display: flex; align-items: center; gap: 6px; height: 25px; margin: 0 -6px 4px; padding: 0 7px 0 8px; background: #549fb8; color: #fff; }
h1 { flex: 1; margin: 0; padding-left: 2px; font-size: 15px; font-weight: 400; line-height: 20px; }
.card { margin-bottom: 3px; border-bottom: 1px solid #c4c4c4; background: #fff; }
.head { display: flex; align-items: center; justify-content: space-between; width: 100%; height: 24px; padding: 0 6px 0 7px; color: #006487; font-size: 15px; line-height: 20px; }
.body { display: flex; flex-direction: column; gap: 2px; padding: 7px 9px 8px; }
.row { display: flex; align-items: center; gap: 2px; }
.field { display: flex; align-items: center; flex: 1; gap: 6px; height: 32px; margin-right: 2px; padding-left: 2px; }
.hot { background: #ffe07a; }
.plain { padding-left: 0; color: #aaa; }
.label { height: 27px; padding-left: 0; }
.b24, .b32 { display: flex; align-items: center; justify-content: center; flex: none; border: 1px solid #999; background: #fff; }
.b24 { width: 24px; height: 24px; }
.b32 { width: 32px; height: 32px; }
.dim { border-color: #c8c8c8; }
.gray { background: #f0f0f0; }
.yellow { border: 0; background: #ffe07a; }
.blue { border: 0; background: #70b2c8; }
.focus { display: flex; align-items: center; justify-content: center; width: 26px; height: 26px; border: 1px dotted #000; }
.focus .i26 { width: 24px; height: 24px; }
.split { display: flex; width: 51px; height: 32px; border: 1px solid #999; }
.split button { display: flex; align-items: center; justify-content: center; flex: 1; }
.split .splitdrop { flex: none; width: 19px; border-left: 1px solid #999; }
.combo.dir { width: 152px; height: 27px; }
.combo.dir::after { right: 6px; }
.combo.dir select { padding-top: 0; padding-left: 4px; }
.preview { display: flex; align-items: center; height: 24px; margin-top: 5px; padding: 0 4px; }
.check { display: flex; align-items: center; flex: 1; gap: 4px; }
.check input { display: grid; place-items: center; width: 14px; height: 14px; margin: 0; border: 1px solid #222; appearance: none; background: #fff; }
.check input:checked::before { content: ""; width: 9px; height: 5px; margin-top: -3px; border: solid #333; border-width: 0 0 1px 1px; transform: rotate(-50deg); }
.result { margin-right: 2px; }
.actions { display: flex; justify-content: flex-end; gap: 5px; margin-top: 12px; padding-right: 10px; }
.actions button { width: 56px; height: 27px; border: 1px solid #999; background: #dcdcdc; }
.actions button:disabled { background: #f0f0f0; color: #aaa; }
</style>
